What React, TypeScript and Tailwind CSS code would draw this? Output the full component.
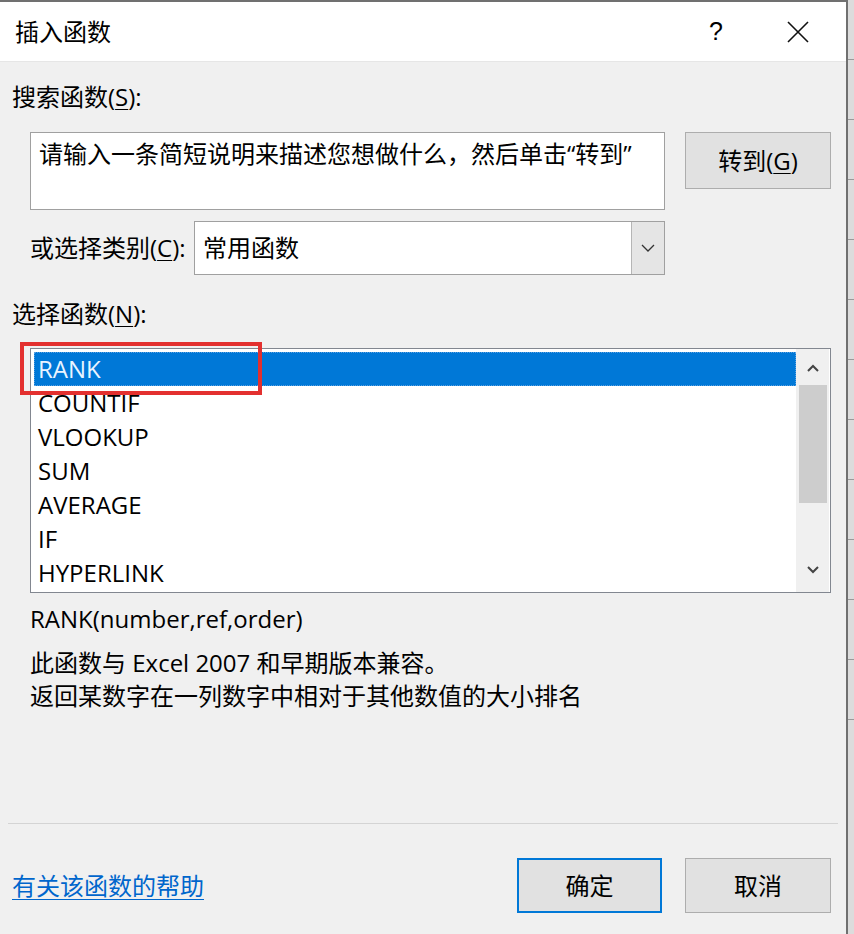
import React from "react";

const FONT = "font-['Open_Sans','Noto_Sans_CJK_SC',sans-serif]";

const items = ["RANK", "COUNTIF", "VLOOKUP", "SUM", "AVERAGE", "IF", "HYPERLINK"];

function U({ children }: { children: React.ReactNode }) {
  return <span className="underline underline-offset-[3px] decoration-1">{children}</span>;
}

export default function App() {
  return (
    <div className={`w-[854px] h-[934px] flex bg-[#dcdcdc] text-black ${FONT}`}>
      <div className="w-[848px] h-full flex flex-col bg-[#f0f0f0] border-t-2 border-r-2 border-[#707070]">
        {/* Title bar */}
        <div className="h-[60px] bg-white flex items-center border-b border-[#e6e6e6] shrink-0">
          <div className="pl-[15px] text-[24px] leading-none">插入函数</div>
          <div className="ml-auto w-[40px] text-center text-[25px] leading-none mr-[50px] font-['Liberation_Sans',sans-serif]">?</div>
          <div className="w-[24px] h-[24px] mr-[36px]">
            <svg viewBox="0 0 24 24" width="24" height="24">
              <path d="M2 2 L22 22 M22 2 L2 22" stroke="#111" strokeWidth="1.6" fill="none" />
            </svg>
          </div>
        </div>

        {/* Body */}
        <div className="flex-1 flex flex-col relative">
          <div className="pl-[12px] mt-[19px] h-[32px] leading-[32px] text-[24px]">
            搜索函数(<U>S</U>):
          </div>

          <div className="flex mt-[19px] ml-[30px]">
            <div className="w-[635px] h-[78px] bg-white border border-[#a0a0a0] pl-[8px] pt-[5px] text-[24px] leading-[32px] whitespace-nowrap">
              请输入一条简短说明来描述您想做什么，然后单击“转到”
            </div>
            <div className="ml-[20px] w-[146px] h-[57px] bg-[#e1e1e1] border border-[#adadad] flex items-center justify-center text-[24px]">
              转到(<U>G</U>)
            </div>
          </div>

          <div className="flex items-center mt-[11px] ml-[30px]">
            <div className="w-[164px] text-[24px] leading-[32px] whitespace-nowrap">
              或选择类别(<U>C</U>):
            </div>
            <div className="w-[471px] h-[54px] bg-white border border-[#a0a0a0] flex">
              <div className="flex-1 pl-[8px] flex items-center text-[24px]">常用函数</div>
              <div className="w-[33px] h-full bg-[#e5e5e5] border-l border-[#b5b5b5] flex items-center justify-center">
                <svg viewBox="0 0 14 8" width="14" height="8">
                  <path d="M1 1 L7 7 L13 1" stroke="#333" strokeWidth="1.3" fill="none" />
                </svg>
              </div>
            </div>
          </div>

          <div className="pl-[12px] mt-[23px] h-[32px] leading-[32px] text-[24px]">
            选择函数(<U>N</U>):
          </div>

          {/* List box */}
          <div className="relative mt-[18px] ml-[30px] w-[801px] h-[245px] bg-white border border-[#828790] flex p-[3px] pr-[1px]">
            <div className="flex-1 flex flex-col">
              {items.map((it, i) => (
                <div
                  key={it}
                  className={
                    i === 0
                      ? "h-[34px] leading-[34px] pl-[4px] text-[24px] bg-[#0078d7] text-[#eaf4ff] outline-1 outline-dotted outline-[#5aa0e0] -outline-offset-1"
                      : "h-[34px] leading-[34px] pl-[4px] text-[24px]"
                  }
                >
                  {it}
                </div>
              ))}
            </div>
            <div className="w-[33px] -mt-[3px] -mb-[3px] bg-[#f0f0f0] flex flex-col items-center">
              <div className="h-[36px] flex items-center justify-center pt-[2px]">
                <svg viewBox="0 0 12 8" width="12" height="8">
                  <path d="M1 7 L6 2 L11 7" stroke="#444" strokeWidth="2" fill="none" />
                </svg>
              </div>
              <div className="w-[28px] h-[118px] bg-[#cdcdcd]" />
              <div className="flex-1" />
              <div className="h-[40px] flex items-center justify-center pb-[4px]">
                <svg viewBox="0 0 12 8" width="12" height="8">
                  <path d="M1 1 L6 6 L11 1" stroke="#444" strokeWidth="2" fill="none" />
                </svg>
              </div>
            </div>
          </div>

          {/* Red annotation */}
          <div className="absolute left-[20px] top-[280px] w-[242px] h-[53px] border-4 border-[#e3302f]" />

          <div className="ml-[30px] mt-[10px] h-[32px] leading-[32px] text-[24px]">RANK(number,ref,order)</div>
          <div className="ml-[30px] mt-[11px] h-[33px] leading-[33px] text-[24px]">此函数与 Excel 2007 和早期版本兼容。</div>
          <div className="ml-[30px] h-[33px] leading-[33px] text-[24px]">返回某数字在一列数字中相对于其他数值的大小排名</div>

          <div className="mt-[111px] mx-[8px] h-px bg-[#d4d4d4]" />

          <div className="flex items-center mt-[34px]">
            <div className="pl-[12px] text-[24px] text-[#0066cc] underline underline-offset-[4px] decoration-1">有关该函数的帮助</div>
            <div className="ml-auto w-[145px] h-[55px] bg-[#e1e1e1] border-2 border-[#0078d7] flex items-center justify-center text-[24px]">
              确定
            </div>
            <div className="ml-[23px] mr-[15px] w-[146px] h-[55px] bg-[#e1e1e1] border border-[#adadad] flex items-center justify-center text-[24px]">
              取消
            </div>
          </div>
        </div>
      </div>
      <div className="flex-1 flex flex-col">
        {Array.from({ length: 12 }).map((_, i) => (
          <div key={i} className="h-[60px] border-b border-[#9a9a9a]" />
        ))}
      </div>
    </div>
  );
}
